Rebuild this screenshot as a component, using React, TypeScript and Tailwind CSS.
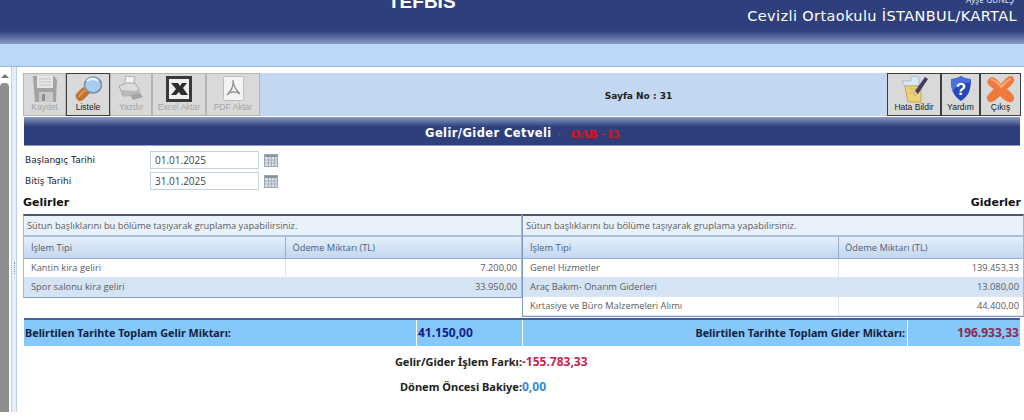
import type { ReactNode } from 'react'

const tahoma = 'font-["DejaVu_Sans",sans-serif]'
const heading = 'font-["Noto_Sans",sans-serif]'
const arial = 'font-["Liberation_Sans",sans-serif]'
const segoe = 'font-["Open_Sans",sans-serif]'

function FloppyIcon() {
  return (
    <svg width="26" height="26" viewBox="0 0 26 26">
      <path d="M1 0h21l3 4-1 22H3z" fill="#a3a3a3" />
      <rect x="5" y="0" width="16" height="12" fill="#e6e6e6" />
      <path d="M7 3h12M7 6h12M7 9h12" stroke="#c4c4c4" />
      <rect x="7" y="16" width="14" height="10" fill="#c8c8c8" />
      <rect x="10" y="18" width="3" height="7" fill="#8e8e8e" />
    </svg>
  )
}

function SearchIcon() {
  return (
    <svg width="27" height="27" viewBox="0 0 27 27">
      <path d="M1 19l7-7 7 6-7 7c-3 2-5 1-6-1-1-1-2-3-1-5z" fill="#c4712e" />
      <path d="M4 22c1-3 5-7 8-7" stroke="#e39a55" strokeWidth="2" fill="none" />
      <ellipse cx="18" cy="10" rx="8.5" ry="8" fill="#a9cdee" stroke="#7a8fa8" strokeWidth="1.6" />
      <path d="M12 6c3-3 8-3 11 0" stroke="#e6f2fc" strokeWidth="2.4" fill="none" />
    </svg>
  )
}

function PrinterIcon() {
  return (
    <svg width="26" height="27" viewBox="0 0 26 27">
      <path d="M8 1l9 1-2 9H6z" fill="#f1f1f1" stroke="#b2b2b2" />
      <path d="M1 11l7-3h9l4 6v6l-16 1z" fill="#dcdcdc" stroke="#a9a9a9" />
      <path d="M3 15l15 1 3-3v6l-16 2z" fill="#b9b9b9" />
      <path d="M12 20l10-2 3 4-10 3z" fill="#a4a4a4" />
    </svg>
  )
}

function ExcelIcon() {
  return (
    <svg width="26" height="26" viewBox="0 0 26 26">
      <rect x="1.5" y="1.5" width="23" height="23" fill="#efefef" stroke="#3a3a3a" strokeWidth="3" />
      <path d="M5 7h7l2 3 2-3h5l-4 5 5 7h-7l-2-3-3 3H5l5-6z" fill="#2c2c2c" />
    </svg>
  )
}

function PdfIcon() {
  return (
    <svg width="21" height="25" viewBox="0 0 21 25">
      <rect x="0.5" y="0.5" width="20" height="24" rx="2" fill="#f4f4f4" stroke="#bcbcbc" />
      <path d="M10 4c1 6-2 11-6 15M10 4c0 6 3 10 7 14M4 19c3-4 9-4 13-1" stroke="#8f8f8f" strokeWidth="1.3" fill="none" />
    </svg>
  )
}

function ReportIcon() {
  return (
    <svg width="27" height="28" viewBox="0 0 27 28">
      <path d="M1 6h9V1l8 1v9H4z" fill="#dbe8f6" stroke="#a9bdd3" />
      <path d="M4 11h16v16H7z" fill="#eed27a" stroke="#c9a94f" />
      <path d="M8 14h10M9 18h6" stroke="#d2b35a" />
      <path d="M24 2l3 2-10 15-4 2 1-5z" fill="#463a66" />
      <path d="M13 21l1-5 3 3z" fill="#e9cf9b" />
    </svg>
  )
}

function HelpIcon() {
  return (
    <svg width="20" height="25" viewBox="0 0 20 25">
      <path d="M10 0c3 2 6 3 10 3 0 10-2 17-10 22C2 20 0 13 0 3c4 0 7-1 10-3z" fill="#2748b8" />
      <path d="M10 0C7 2 4 3 0 3c0 5 0 9 2 13C5 8 11 5 19 7l1-4c-4 0-7-1-10-3z" fill="#4a6fdb" />
      <text x="10" y="19" textAnchor="middle" fontSize="17" fontWeight="700" fill="#ffffff" fontFamily="Liberation Sans">?</text>
    </svg>
  )
}

function ExitIcon() {
  return (
    <svg width="29" height="28" viewBox="0 0 29 28">
      <path d="M2 5c3-5 8-3 13 4 5-6 9-10 12-7 3 3 0 7-6 12 5 4 9 8 6 12-3 3-8 0-13-5-5 5-9 8-12 5-3-3 0-7 6-12C3 11 0 8 2 5z" fill="#ee7a3e" />
      <path d="M5 5c3-1 7 3 10 7 4-4 7-8 10-8" stroke="#f8ab7c" strokeWidth="2" fill="none" />
    </svg>
  )
}

function CalendarIcon() {
  return (
    <svg width="14" height="13" viewBox="0 0 14 13">
      <rect x="0.5" y="0.5" width="13" height="12" fill="#d8dfe8" stroke="#9aa6b4" />
      <rect x="1" y="1" width="12" height="2" fill="#8794a5" />
      <path d="M4.5 3v9M7.5 3v9M10.5 3v9M1 6h12M1 9h12" stroke="#a8b2bf" />
    </svg>
  )
}

function ToolButton({ label, icon, disabled, width }: { label: string; icon: ReactNode; disabled?: boolean; width: string }) {
  return (
    <div className={`${width} h-[43px] shrink-0 border ${disabled ? 'border-[#b5b5b5]' : 'border-[#3d3d3d]'} bg-[#d9d9d9] flex flex-col items-center justify-between pt-px pb-[3px]`}>
      <div className="h-[27px] flex items-center justify-center">{icon}</div>
      <span className={`${arial} text-[8.5px] leading-[10px] whitespace-nowrap ${disabled ? 'text-[#a6a6a6]' : 'text-[#1a1a1a]'}`}>{label}</span>
    </div>
  )
}

function DateRow({ label, value }: { label: string; value: string }) {
  return (
    <div className="flex items-center h-[18px]">
      <span className={`${tahoma} w-[127px] pl-[2px] pt-[2px] text-[9px] text-[#222]`}>{label}</span>
      <div className={`${segoe} w-[109px] h-[18px] border border-[#c5d2e0] pl-[4px] text-[10px] leading-[17px] text-[#444]`}>{value}</div>
      <div className="ml-[5px] flex"><CalendarIcon /></div>
    </div>
  )
}

type Row = { name: string; amount: string }

function Grid({ rows, firstCol, secondCol }: { rows: Row[]; firstCol: string; secondCol: string }) {
  return (
    <div className={`${segoe} text-[9.3px] text-[#5c5c5c]`}>
      <div className="h-[21px] bg-[#e9f1fb] border-b-2 border-[#a8c0dc] pl-[3px] leading-[20px]">Sütun başlıklarını bu bölüme taşıyarak gruplama yapabilirsiniz.</div>
      <div className="flex h-[22px] bg-gradient-to-b from-[#e6effa] to-[#c3d7ef] border-b border-[#90aed0] text-[#4a5f7a] leading-[21px]">
        <div className={`${firstCol} pl-[7px] border-r border-[#90aed0]`}>İşlem Tipi</div>
        <div className={`${secondCol} pl-[6px]`}>Ödeme Miktarı (TL)</div>
      </div>
      {rows.map((row, i) => (
        <div key={row.name} className={`flex h-[19px] leading-[18px] border-b border-[#dbe6f3] ${i % 2 ? 'bg-[#d5e4f5]' : 'bg-white'}`}>
          <div className={`${firstCol} pl-[7px] ${i % 2 ? '' : 'border-r border-[#dbe6f3]'}`}>{row.name}</div>
          <div className={`${secondCol} pr-[4px] text-right`}>{row.amount}</div>
        </div>
      ))}
    </div>
  )
}

const incomes: Row[] = [
  { name: 'Kantin kira geliri', amount: '7.200,00' },
  { name: 'Spor salonu kira geliri', amount: '33.950,00' },
]

const expenses: Row[] = [
  { name: 'Genel Hizmetler', amount: '139.453,33' },
  { name: 'Araç Bakım- Onarım Giderleri', amount: '13.080,00' },
  { name: 'Kırtasiye ve Büro Malzemeleri Alımı', amount: '44.400,00' },
]

export default function App() {
  return (
    <div className="w-[1024px] h-[420px] overflow-hidden bg-white flex flex-col">
      <header className="h-[67px] shrink-0 flex flex-col border-b border-[#9db5d2]">
        <div className="h-[44px] bg-gradient-to-b from-[#2f3f7c] from-70% to-[#8d9bc4]">
          <div className="flex justify-between">
            <div className={`${arial} ml-[388px] -mt-[9px] text-[19px] leading-[22px] font-bold text-white`}>TEFBIS</div>
            <div className="pr-[7px] text-right text-white -mt-[6px]">
              <div className={`${segoe} pr-[3px] text-[9px] italic leading-[12px] text-[#dfe6f5]`}>Ayşe GÜNEŞ</div>
              <div className={`${tahoma} text-[14.5px] leading-[20px] tracking-[0.38px]`}>Cevizli Ortaokulu İSTANBUL/KARTAL</div>
            </div>
          </div>
        </div>
        <div className="flex-1 bg-[#bcd8fb]" />
      </header>

      <div className="flex h-[345px]">
        <div className="w-[9px] shrink-0 flex flex-col">
          <div className="h-[16px] flex items-end justify-center pb-[5px]">
            <div className="w-0 h-0 border-x-[4px] border-x-transparent border-b-[4px] border-b-[#777]" />
          </div>
          <div className="flex-1 bg-[#8e8e8e] rounded-t-[4px]" />
        </div>
        <div className="w-[6px] shrink-0 ml-[2px] border-x border-[#bcd0e6] bg-[#e6eff9] flex items-center justify-center pt-[56px]">
          <div className="h-[12px] border-l border-dotted border-[#8aa0b8]" />
        </div>

        <main className="w-[1007px] shrink-0 pl-[6px] pt-[6px] relative">
          <div className="w-[998px] h-[43px] flex justify-between bg-[#c3d8f0]">
            <div className="flex">
              <ToolButton label="Kaydet" icon={<FloppyIcon />} disabled width="w-[43px]" />
              <ToolButton label="Listele" icon={<SearchIcon />} width="w-[44px]" />
              <ToolButton label="Yazdır" icon={<PrinterIcon />} disabled width="w-[42px]" />
              <ToolButton label="Excel Aktar" icon={<ExcelIcon />} disabled width="w-[54px]" />
              <ToolButton label="PDF Aktar" icon={<PdfIcon />} disabled width="w-[54px]" />
            </div>
            <div className={`${tahoma} flex-1 text-center text-[9px] font-bold leading-[47px] text-[#222] pl-[130px]`}>Sayfa No : 31</div>
            <div className="flex">
              <ToolButton label="Hata Bildir" icon={<ReportIcon />} width="w-[54px]" />
              <ToolButton label="Yardım" icon={<HelpIcon />} width="w-[39px]" />
              <ToolButton label="Çıkış" icon={<ExitIcon />} width="w-[41px]" />
            </div>
          </div>

          <div className="ml-px mt-[1px] w-[996px] h-[29px] pt-[5px] flex items-center justify-center bg-gradient-to-b from-[#8d9bc4] via-[#2f3f7c] via-35% to-[#2f3f7c] border-b border-[#8d9bc4]">
            <span className={`${tahoma} text-[11.5px] font-bold text-white tracking-[0.4px]`}>Gelir/Gider Cetveli</span>
            <span className="ml-[6px] text-[10px] text-[#55608c]">-</span>
            <span className="ml-[10px] font-['Liberation_Serif',serif] text-[12px] font-bold text-[#f01226] [text-shadow:1px_1px_0_#7a1730]">OAB - 13</span>
          </div>

          <div className="mt-[5px] flex flex-col gap-[3px]">
            <DateRow label="Başlangıç Tarihi" value="01.01.2025" />
            <DateRow label="Bitiş Tarihi" value="31.01.2025" />
          </div>

          <div className={`${tahoma} mt-[6px] w-[998px] flex justify-between text-[11px] leading-[14px] font-bold text-[#111]`}>
            <span>Gelirler</span>
            <span>Giderler</span>
          </div>

          <div className="mt-[4px] w-[1001px] flex items-start">
            <div className="w-[499px] border-t-2 border-[#4a5a6e] border-x border-x-[#9fb8d4] border-b border-b-[#7f9cbe]">
              <Grid rows={incomes} firstCol="w-[263px]" secondCol="w-[235px]" />
            </div>
            <div className="w-[502px] border-t-2 border-[#4a5a6e] border-r border-r-[#9fb8d4] border-l border-l-[#7f9cbe] border-b border-b-[#7f9cbe]">
              <Grid rows={expenses} firstCol="w-[316px]" secondCol="w-[184px]" />
            </div>
          </div>

          <div className={`${heading} absolute top-[251px] left-[7px] w-[996px] h-[28px] flex border-t-2 border-[#4a5f9c] bg-[#85c8fb] text-[10.8px] font-bold leading-[26px]`}>
            <div className="w-[392px] pl-[1px] text-[#14213d]">Belirtilen Tarihte Toplam Gelir Miktarı:</div>
            <div className="w-[106px] border-l border-white pl-[1px] text-[12px] text-[#141c8c]">41.150,00</div>
            <div className="w-[385px] border-l border-white pr-[2px] text-right text-[#14213d]">Belirtilen Tarihte Toplam Gider Miktarı:</div>
            <div className="flex-1 border-l border-white pr-[1px] text-right text-[12px] text-[#8c2a4e]">196.933,33</div>
          </div>

          <div className={`${heading} absolute top-[282px] left-[7px] w-[996px] text-[11px] font-bold leading-[25px]`}>
            <div className="flex items-baseline">
              <span className="w-[498px] text-right text-[#222]">Gelir/Gider İşlem Farkı:</span>
              <span className="text-[12px] text-[#c0264f]">-155.783,33</span>
            </div>
            <div className="flex items-baseline">
              <span className="w-[498px] text-right text-[#222]">Dönem Öncesi Bakiye:</span>
              <span className="text-[12px] text-[#2f8ae0]">0,00</span>
            </div>
          </div>
        </main>
      </div>
    </div>
  )
}
